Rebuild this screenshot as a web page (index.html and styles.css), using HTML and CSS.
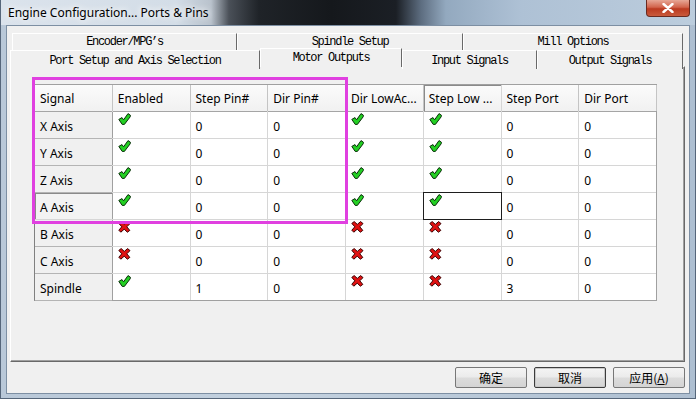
FILE: index.html
```html
<!DOCTYPE html>
<html lang="en">

<head>
    <meta charset="UTF-8">
    <title>Engine Configuration... Ports &amp; Pins</title>
    <link rel="stylesheet" href="styles.css">
</head>

<body>
    <svg class="defs" width="0" height="0">
        <symbol id="ok" viewBox="0 0 13 12">
            <path d="M0.8 6.4 L4 4.6 L5.6 6.8 L10 0.6 L12.4 2.2 L12.2 3.8 L6.4 11.4 L4.2 11.4 Z" fill="#23cf23" stroke="#0b2e0b" stroke-width="1" stroke-linejoin="round"/>
        </symbol>
        <symbol id="no" viewBox="0 0 13 12">
            <path d="M0.8 2.4 L3.2 0.6 L6.3 3.4 L9.6 0.6 L12 2.6 L8.8 5.8 L11.8 9.4 L9.4 11.2 L6.2 8.2 L2.8 11.2 L0.8 9.2 L3.8 5.8 Z" fill="#e01212" stroke="#3a0000" stroke-width="1" stroke-linejoin="round"/>
        </symbol>
    </svg>

    <div class="window">
        <div class="titlebar">
            <span class="title">Engine Configuration... Ports &amp; Pins</span>
            <span class="close">
                <svg width="12" height="10" viewBox="0 0 12 10">
                    <path d="M1.5 1 L10.5 9 M10.5 1 L1.5 9" stroke="#fff" stroke-width="2.4" stroke-linecap="round"/>
                </svg>
            </span>
        </div>

        <div class="client">
            <div class="tabctl">
                <div class="tabrow row1">
                    <div class="tab">Encoder/MPG’s</div>
                    <div class="tab">Spindle Setup</div>
                    <div class="tab">Mill Options</div>
                </div>
                <div class="tabrow row2">
                    <div class="tab">Port Setup and Axis Selection</div>
                    <div class="tab active">Motor Outputs</div>
                    <div class="tab">Input Signals</div>
                    <div class="tab">Output Signals</div>
                </div>

                <div class="panel">
                    <div class="grid-wrap">
                        <div class="grid">
                            <div class="c h first">Signal</div>
                            <div class="c h">Enabled</div>
                            <div class="c h">Step Pin#</div>
                            <div class="c h">Dir Pin#</div>
                            <div class="c h">Dir LowAc...</div>
                            <div class="c h sel">Step Low ...</div>
                            <div class="c h">Step Port</div>
                            <div class="c h">Dir Port</div>

                            <div class="c rh">X Axis</div>
                            <div class="c ico"><svg><use href="#ok"/></svg></div>
                            <div class="c">0</div>
                            <div class="c">0</div>
                            <div class="c ico"><svg><use href="#ok"/></svg></div>
                            <div class="c ico"><svg><use href="#ok"/></svg></div>
                            <div class="c">0</div>
                            <div class="c">0</div>

                            <div class="c rh">Y Axis</div>
                            <div class="c ico"><svg><use href="#ok"/></svg></div>
                            <div class="c">0</div>
                            <div class="c">0</div>
                            <div class="c ico"><svg><use href="#ok"/></svg></div>
                            <div class="c ico"><svg><use href="#ok"/></svg></div>
                            <div class="c">0</div>
                            <div class="c">0</div>

                            <div class="c rh">Z Axis</div>
                            <div class="c ico"><svg><use href="#ok"/></svg></div>
                            <div class="c">0</div>
                            <div class="c">0</div>
                            <div class="c ico"><svg><use href="#ok"/></svg></div>
                            <div class="c ico"><svg><use href="#ok"/></svg></div>
                            <div class="c">0</div>
                            <div class="c">0</div>

                            <div class="c rh cur">A Axis</div>
                            <div class="c ico"><svg><use href="#ok"/></svg></div>
                            <div class="c">0</div>
                            <div class="c">0</div>
                            <div class="c ico"><svg><use href="#ok"/></svg></div>
                            <div class="c ico focus"><svg><use href="#ok"/></svg></div>
                            <div class="c">0</div>
                            <div class="c">0</div>

                            <div class="c rh">B Axis</div>
                            <div class="c ico"><svg><use href="#no"/></svg></div>
                            <div class="c">0</div>
                            <div class="c">0</div>
                            <div class="c ico"><svg><use href="#no"/></svg></div>
                            <div class="c ico"><svg><use href="#no"/></svg></div>
                            <div class="c">0</div>
                            <div class="c">0</div>

                            <div class="c rh">C Axis</div>
                            <div class="c ico"><svg><use href="#no"/></svg></div>
                            <div class="c">0</div>
                            <div class="c">0</div>
                            <div class="c ico"><svg><use href="#no"/></svg></div>
                            <div class="c ico"><svg><use href="#no"/></svg></div>
                            <div class="c">0</div>
                            <div class="c">0</div>

                            <div class="c rh">Spindle</div>
                            <div class="c ico"><svg><use href="#ok"/></svg></div>
                            <div class="c">1</div>
                            <div class="c">0</div>
                            <div class="c ico"><svg><use href="#no"/></svg></div>
                            <div class="c ico"><svg><use href="#no"/></svg></div>
                            <div class="c">3</div>
                            <div class="c">0</div>
                        </div>
                        <div class="mark"></div>
                    </div>
                </div>
            </div>

            <div class="buttons">
                <button class="btn">确定</button>
                <button class="btn focused">取消</button>
                <button class="btn">应用(<u>A</u>)</button>
            </div>
        </div>
    </div>
</body>

</html>
```

FILE: styles.css
```css
* {
    margin: 0;
    padding: 0;
    box-sizing: border-box;
}

body {
    width: 696px;
    height: 399px;
    overflow: hidden;
    font-family: "Noto Sans", sans-serif;
    font-size: 12px;
    color: #000;
    background: #fff;
}

.defs {
    position: absolute;
}

.window {
    width: 696px;
    height: 399px;
    display: flex;
    flex-direction: column;
    background: linear-gradient(to right, #b9c8d8, #c3d1df 40%, #aebfd1);
    border-left: 1px solid #56667a;
    border-right: 1px solid #56667a;
    border-bottom: 1px solid #56667a;
}

/* title bar */
.titlebar {
    height: 25px;
    display: flex;
    justify-content: space-between;
    align-items: flex-start;
    padding: 0 5px 0 7px;
    background: linear-gradient(to right, #dbe3ec 0px, #d3dde7 175px, #b9c2cc 210px, #4a5058 228px, #1f2328 258px, #15181c 330px, #1b1f25 395px, #5d6d80 420px, #93a9bf 445px, #aec1d5 520px, #bccddd 695px);
}

.title {
    line-height: 26px;
    font-size: 12px;
    text-shadow: 0 0 6px #fff, 0 0 10px #fff;
}

.close {
    width: 44px;
    height: 17px;
    display: flex;
    align-items: center;
    justify-content: center;
    background: linear-gradient(#e7a796, #d2644c 45%, #bb3a20 55%, #c95a3c);
    border: 1px solid #6a2a20;
    border-top: none;
    border-radius: 0 0 4px 4px;
}

/* client area */
.client {
    flex: 1;
    margin: 0 5px 4px 5px;
    background: #f0f0f0;
    border: 1px solid #7d8fa3;
    display: flex;
    flex-direction: column;
    padding: 7px 3px 0 3px;
}

.tabctl {
    width: 675px;
    display: flex;
    flex-direction: column;
}

.tabrow {
    display: grid;
}

.row1 {
    grid-template-columns: 225px 226px 220px;
    height: 17px;
    margin-left: 2px;
}

.row2 {
    grid-template-columns: 250px 142px 135px 146px;
    height: 16px;
    position: relative;
    z-index: 2;
}

.tab {
    font-family: "Liberation Mono", monospace;
    font-size: 12px;
    letter-spacing: -1.3px;
    text-align: center;
    line-height: 15px;
    padding-top: 1px;
    white-space: nowrap;
    background: #f0f0f0;
    border-top: 1px solid #fff;
    border-left: 1px solid #fff;
    border-right: 1px solid #696969;
}

.row2 .tab {
    line-height: 16px;
    padding-top: 2px;
}

.row2 .tab.active {
    margin-top: -2px;
    height: 19px;
    padding-top: 1px;
}

.panel {
    height: 296px;
    background: #f0f0f0;
    border-top: 1px solid #fff;
    border-left: 1px solid #fff;
    border-right: 1px solid #696969;
    border-bottom: 1px solid #696969;
    box-shadow: inset -1px -1px 0 #a0a0a0;
    padding: 17px 0 0 23px;
}

/* grid */
.grid-wrap {
    position: relative;
    width: 623px;
}

.grid {
    display: grid;
    grid-template-columns: repeat(8, 1fr);
    grid-template-rows: repeat(8, 26px);
    gap: 1px;
    background: #d6d6d6;
    border: 1px solid #a0a0a0;
    border-left-color: #808080;
}

.c {
    background: #fff;
    display: flex;
    align-items: center;
    padding: 2px 0 0 5px;
    white-space: nowrap;
    overflow: hidden;
}

.c.h {
    background: linear-gradient(#fbfbfb, #f1f1f1);
    box-shadow: 0 1px 0 #a5a5a5, 1px 0 0 #c4c4c4;
    padding-top: 0;
}

.c.h.sel {
    box-shadow: inset 1px 1px 0 #8a8a8a, 0 1px 0 #a5a5a5;
}

.c.rh {
    background: #f0f0f0;
    box-shadow: 1px 0 0 #a0a0a0, 0 1px 0 #b4b4b4;
}

.c.rh.cur {
    background: #f3f3f3;
    box-shadow: inset 1px 1px 0 #8a8a8a, 1px 0 0 #a0a0a0;
}

.c.ico {
    align-items: flex-start;
    padding: 1px 0 0 5px;
}

.c.ico svg {
    width: 13px;
    height: 12px;
}

.c.focus {
    outline: 1px solid #1e1e1e;
    position: relative;
    z-index: 1;
}

.mark {
    position: absolute;
    left: -2px;
    top: -7px;
    width: 316px;
    height: 147px;
    border: 3px solid #e040e0;
    pointer-events: none;
}

/* dialog buttons */
.buttons {
    display: flex;
    justify-content: flex-end;
    gap: 7px;
    margin-top: 5px;
    width: 675px;
}

.btn {
    width: 72px;
    height: 21px;
    font-family: "Noto Sans CJK SC", sans-serif;
    font-size: 12px;
    color: #000;
    background: linear-gradient(#f4f4f4, #ebebeb 48%, #dcdcdc 52%, #d4d4d4);
    border: 1px solid #777;
    border-radius: 2px;
}

.btn.focused {
    border-color: #3c3c3c;
    box-shadow: inset 0 0 0 1px #c8c8c8;
}

.btn u {
    text-underline-offset: 1px;
}
```
